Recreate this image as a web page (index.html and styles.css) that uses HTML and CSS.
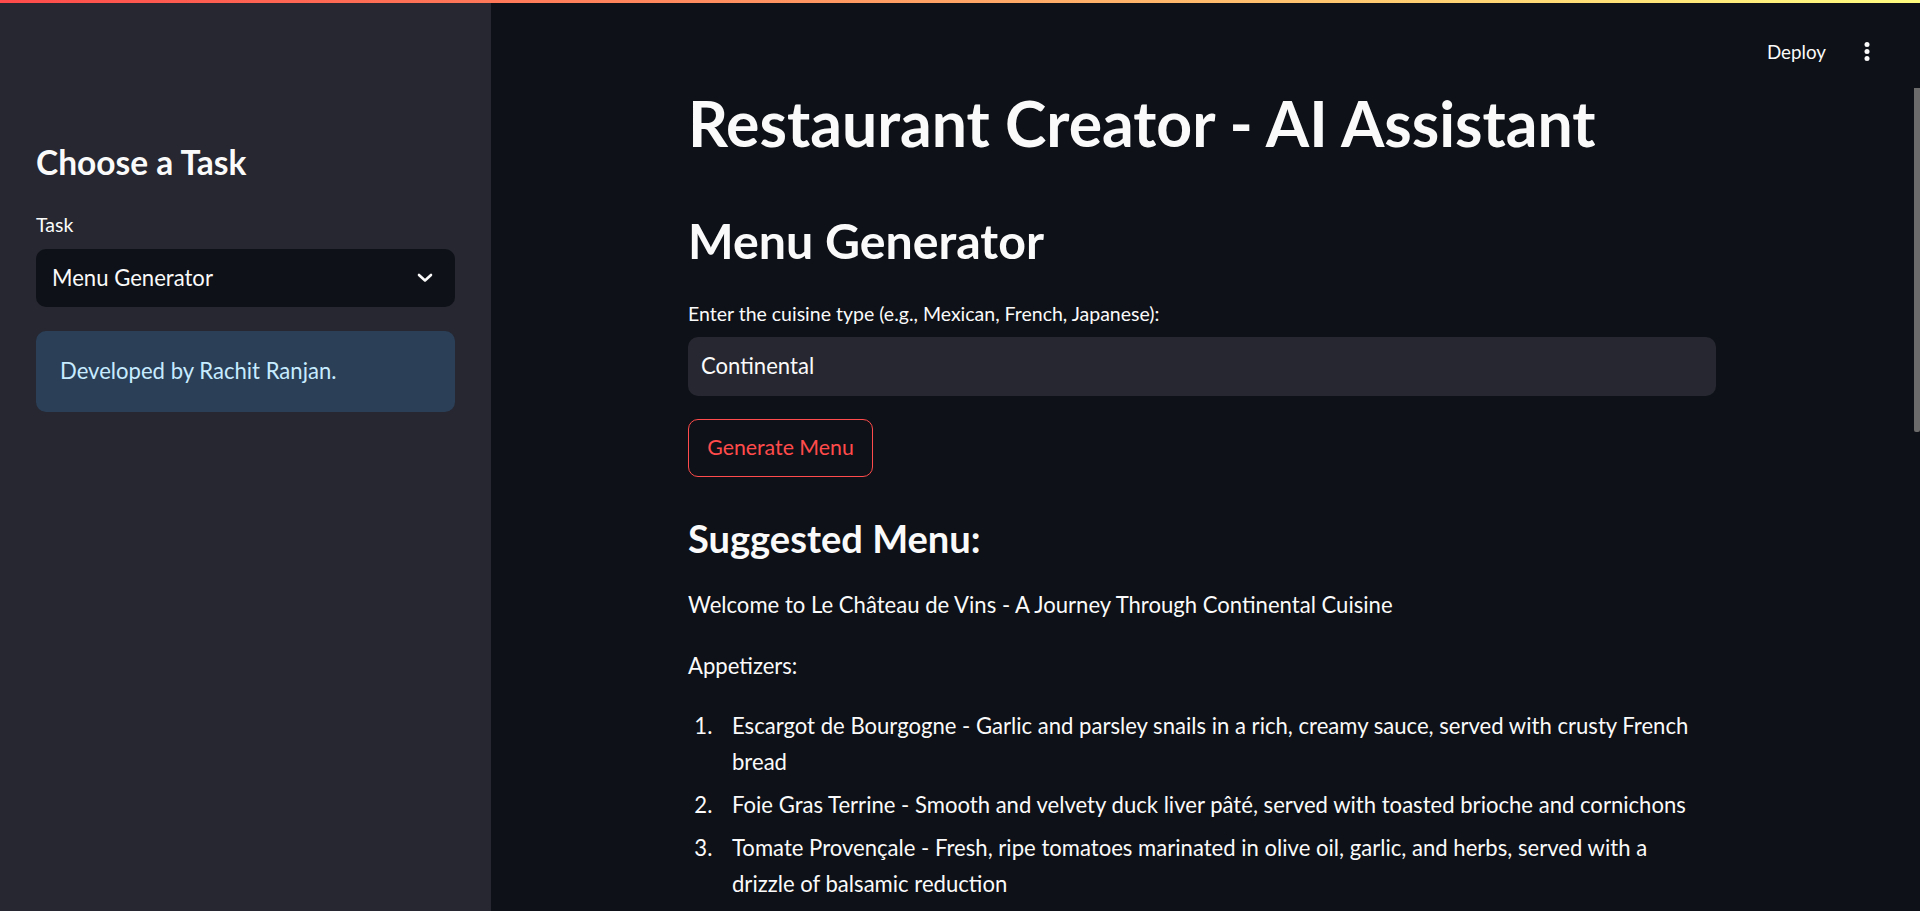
FILE: index.html
```html
<!DOCTYPE html>
<html lang="en">
<head>
<meta charset="utf-8">
<title>Restaurant Creator - AI Assistant</title>
<link rel="stylesheet" href="styles.css">
</head>
<body>
<div class="decoration"></div>
<div class="app">
  <aside class="sidebar">
    <h2 class="side-title">Choose a Task</h2>
    <div class="side-label">Task</div>
    <div class="select">
      <span>Menu Generator</span>
      <svg class="chevron" width="16" height="10" viewBox="0 0 16 10"><path d="M2 2 L8 7.5 L14 2" fill="none" stroke="#fafafa" stroke-width="2.6" stroke-linecap="round" stroke-linejoin="round"/></svg>
    </div>
    <div class="info">Developed by Rachit Ranjan.</div>
  </aside>
  <main class="main">
    <header class="toolbar">
      <span class="deploy">Deploy</span>
      <svg class="kebab" width="24" height="24" viewBox="0 0 24 24"><circle cx="12" cy="4.5" r="2.5" fill="#fafafa"/><circle cx="12" cy="11.5" r="2.5" fill="#fafafa"/><circle cx="12" cy="18.5" r="2.5" fill="#fafafa"/></svg>
    </header>
    <div class="block">
      <h1 class="title">Restaurant Creator - AI Assistant</h1>
      <h2 class="subtitle">Menu Generator</h2>
      <div class="field-label">Enter the cuisine type (e.g., Mexican, French, Japanese):</div>
      <div class="text-input">Continental</div>
      <div class="btn">Generate Menu</div>
      <h3 class="section">Suggested Menu:</h3>
      <p class="para">Welcome to Le Château de Vins - A Journey Through Continental Cuisine</p>
      <p class="para">Appetizers:</p>
      <ol class="menu-list">
        <li>Escargot de Bourgogne - Garlic and parsley snails in a rich, creamy sauce, served with crusty French bread</li>
        <li>Foie Gras Terrine - Smooth and velvety duck liver pâté, served with toasted brioche and cornichons</li>
        <li>Tomate Provençale - Fresh, ripe tomatoes marinated in olive oil, garlic, and herbs, served with a drizzle of balsamic reduction</li>
      </ol>
    </div>
    <div class="scroll-thumb"></div>
  </main>
</div>
</body>
</html>
```

FILE: styles.css
```css
* { box-sizing: border-box; }
html, body { margin: 0; padding: 0; }
body {
  background: #0e1117;
  color: #fafafa;
  font-family: Lato, "Noto Sans", sans-serif;
  font-size: 22.1px;
  width: 1920px;
  height: 911px;
  overflow: hidden;
}
.decoration {
  position: absolute;
  top: 0; left: 0; right: 0;
  height: 3px;
  background: linear-gradient(90deg, #ff4b4b, #fffd80);
  z-index: 10;
}
.app { display: flex; height: 911px; }
.sidebar {
  width: 491px;
  flex: none;
  background: #262730;
  padding: 142px 36px 0 36px;
  display: flex;
  flex-direction: column;
}
.side-title {
  margin: 0;
  font-size: 33.5px;
  font-weight: 700;
  line-height: 1.2;
}
.side-label {
  margin-top: 29px;
  font-size: 19.5px;
  line-height: 28px;
}
.select {
  margin-top: 10px;
  height: 58px;
  background: #0e1117;
  border-radius: 10px;
  display: flex;
  align-items: center;
  justify-content: space-between;
  padding: 0 22px 0 16px;
  line-height: 1.2;
}
.info {
  margin-top: 24px;
  height: 81px;
  background: #2b3f57;
  color: #c7ebff;
  border-radius: 10px;
  display: flex;
  align-items: center;
  padding: 0 24px;
  line-height: 1.2;
}
.main {
  flex: 1;
  position: relative;
  padding-right: 7px;
}
.toolbar {
  position: absolute;
  top: 0; right: 0;
  height: 104px;
  display: flex;
  align-items: center;
  gap: 29px;
  padding-right: 41px;
}
.deploy { font-size: 18.8px; line-height: 1.2; }
.kebab { display: block; }
.block {
  width: 1028px;
  margin: 0 auto;
  padding-top: 85px;
}
.title {
  margin: 0;
  font-size: 62.5px;
  font-weight: 700;
  line-height: 1.2;
}
.subtitle {
  margin: 52px 0 0;
  font-size: 48.3px;
  font-weight: 700;
  line-height: 1.2;
}
.field-label {
  margin-top: 30px;
  font-size: 19.5px;
  line-height: 28px;
}
.text-input {
  margin-top: 9px;
  height: 59px;
  background: #262730;
  border-radius: 10px;
  display: flex;
  align-items: center;
  padding: 0 13px;
  line-height: 1.2;
}
.btn {
  margin-top: 23px;
  height: 58px;
  width: 185px;
  border: 1px solid #ff4b4b;
  border-radius: 10px;
  color: #ff4b4b;
  font-size: 21.3px;
  display: flex;
  align-items: center;
  justify-content: center;
  line-height: 1.2;
}
.section {
  margin: 39px 0 0;
  font-size: 38.1px;
  font-weight: 700;
  line-height: 1.2;
}
.para {
  margin: 25px 0 0;
  line-height: 36.6px;
}
.menu-list {
  margin: 23px 0 0;
  padding: 0 12px 0 30px;
  line-height: 36.6px;
}
.menu-list li { padding-left: 14px; }
.menu-list li + li { margin-top: 6px; }
.scroll-thumb {
  position: absolute;
  top: 88px;
  right: 0;
  width: 6px;
  height: 344px;
  background: #6b6b6b;
  border-radius: 0 0 2px 2px;
}
```
